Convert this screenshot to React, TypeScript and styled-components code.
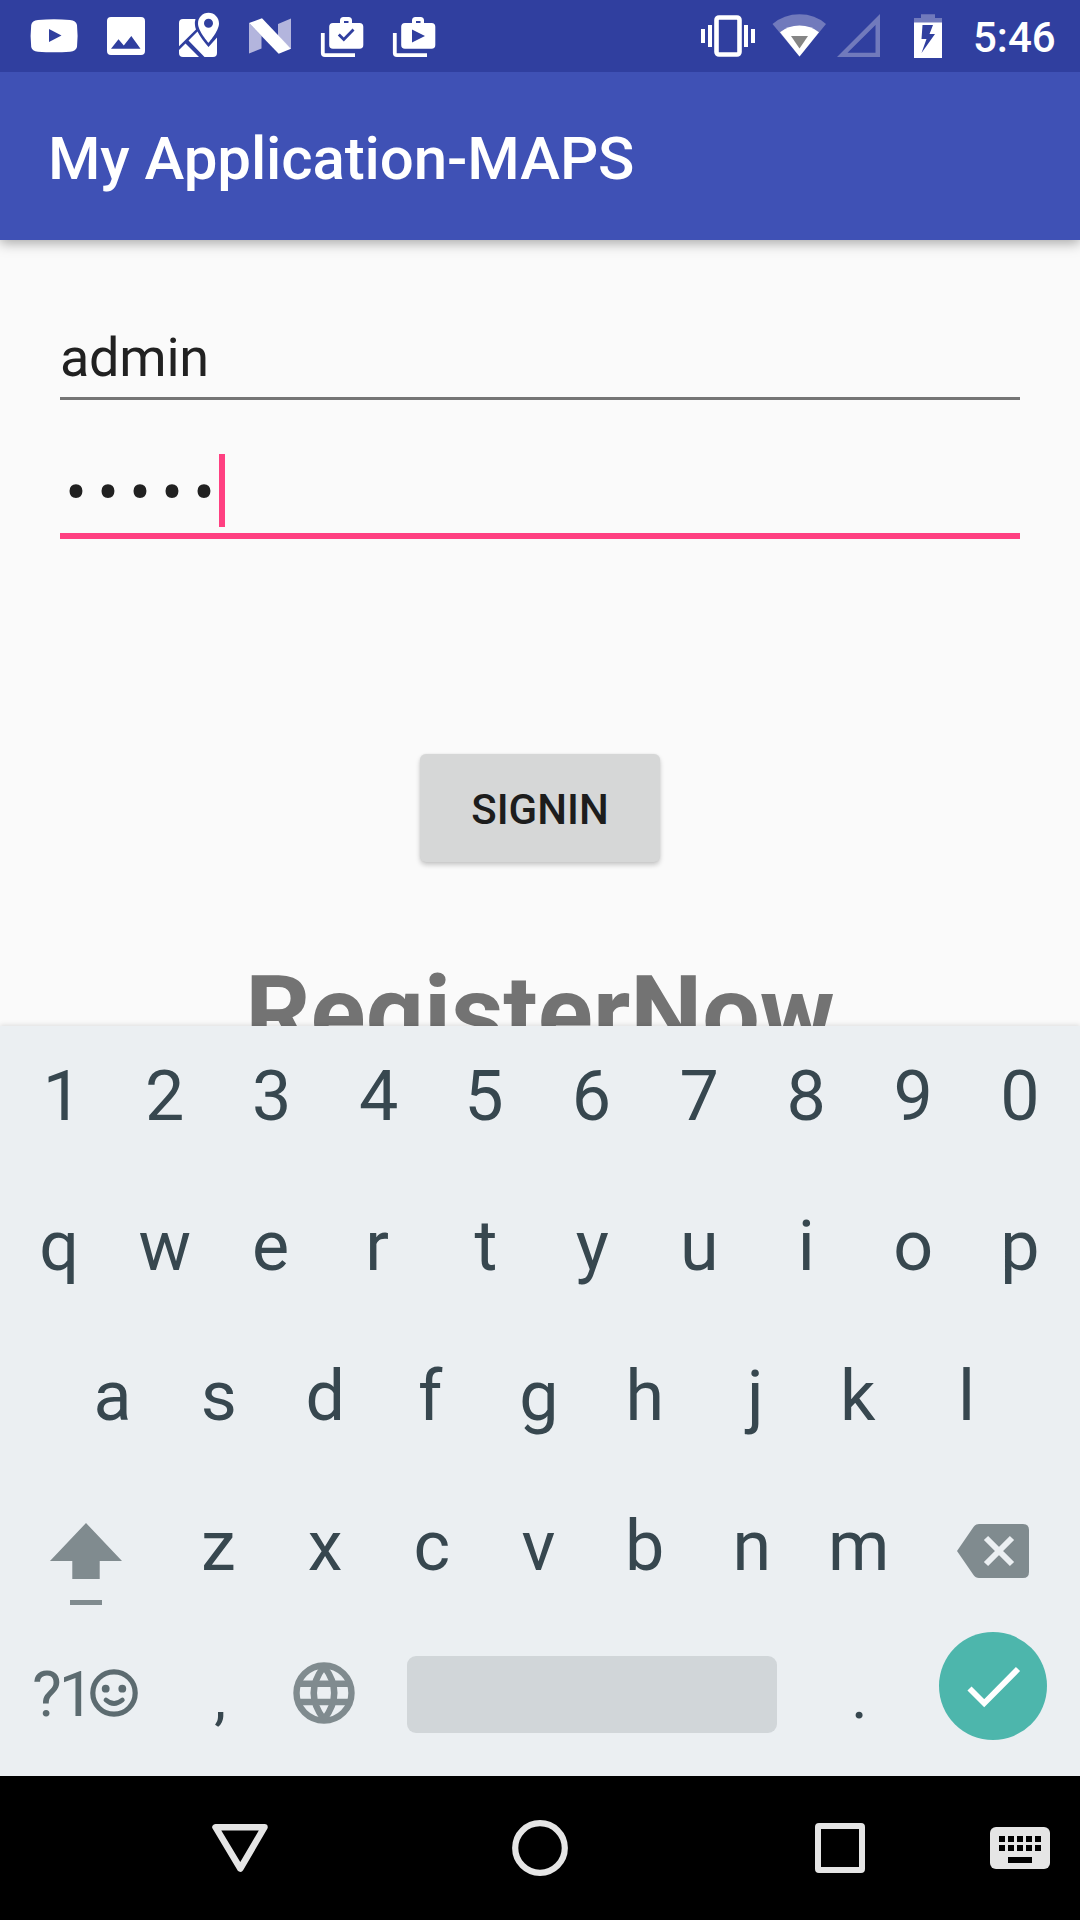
import React from "react";
import styled, { createGlobalStyle } from "styled-components";

const Global = createGlobalStyle`
  * { box-sizing: border-box; }
  body { margin: 0; }
`;

const Screen = styled.div`
  width: 1080px;
  height: 1920px;
  display: flex;
  flex-direction: column;
  overflow: hidden;
  background: #fafafa;
  font-family: Roboto, "Noto Sans", sans-serif;
`;

const StatusBar = styled.header`
  height: 72px;
  flex: none;
  display: flex;
  position: relative;
  z-index: 2;
  background: #303f9f;
  padding-left: 18px;
`;

const StatusGroup = styled.div`
  display: flex;
`;

const Icon = styled.svg`
  display: block;
  flex: none;
`;

const Spacer = styled.div`
  flex: 1;
`;

const Clock = styled.div`
  width: 107px;
  font-size: 42px;
  font-weight: 500;
  line-height: 69px;
  padding-top: 3px;
  color: #fff;
`;

const AppBar = styled.div`
  height: 168px;
  flex: none;
  position: relative;
  z-index: 1;
  background: #3f51b5;
  padding: 5px 48px 0;
  box-shadow: 0 3px 12px rgba(0, 0, 0, 0.34);
`;

const Title = styled.h1`
  margin: 0;
  color: #fff;
  font-size: 60px;
  font-weight: 500;
  line-height: 163px;
  letter-spacing: -0.1px;
  white-space: nowrap;
`;

const Main = styled.main`
  height: 786px;
  flex: none;
  overflow: hidden;
  display: flex;
  flex-direction: column;
  align-items: center;
  padding-top: 82px;
`;

const Field = styled.div<{ $active?: boolean }>`
  width: 960px;
  flex: none;
  height: ${(p) => (p.$active ? 91 : 78)}px;
  margin-top: ${(p) => (p.$active ? 48 : 0)}px;
  display: flex;
  align-items: flex-start;
  border-bottom: ${(p) => (p.$active ? "6px solid #ff4081" : "3px solid #757575")};
`;

const FieldText = styled.span`
  font-size: 54px;
  line-height: 71px;
  letter-spacing: -0.25px;
  color: #212121;
`;

const Dots = styled.span`
  width: 159px;
  padding: 10px 0 0 5.2px;
  font-size: 64px;
  line-height: 71px;
  letter-spacing: 10.4px;
  white-space: nowrap;
  color: #212121;
`;

const Caret = styled.span`
  width: 6px;
  height: 73px;
  margin-top: 6px;
  background: #ff4081;
`;

const SignIn = styled.button`
  flex: none;
  width: 240px;
  height: 108px;
  margin-top: 215px;
  border: 0;
  border-radius: 6px;
  padding: 3px 0 0;
  background: #d6d7d7;
  color: #1d1d1d;
  font: 500 42px/105px Roboto, sans-serif;
  box-shadow: 0 3px 5px rgba(0, 0, 0, 0.2), 0 0 2px rgba(0, 0, 0, 0.08);
`;

const Register = styled.div`
  flex: none;
  margin-top: 91px;
  font-size: 102px;
  font-weight: 700;
  line-height: 120px;
  color: #737373;
`;

const Keyboard = styled.section`
  height: 750px;
  flex: none;
  position: relative;
  background: #ebeff2;
  box-shadow: 0 -1px 5px rgba(0, 0, 0, 0.12);
`;

const KeyRow = styled.div<{ $left?: number; $right?: number }>`
  height: 150px;
  display: flex;
  padding-left: ${(p) => p.$left ?? 0}px;
  padding-right: ${(p) => p.$right ?? 0}px;
`;

const Key = styled.div<{ $size?: number; $top?: number; $nudge?: number }>`
  flex: 1 1 0;
  min-width: 0;
  text-align: center;
  font-size: ${(p) => p.$size ?? 70}px;
  line-height: 140px;
  height: 140px;
  margin-top: ${(p) => p.$top ?? 0}px;
  text-indent: ${(p) => (p.$nudge ?? 0) * 2}px;
  color: #37474f;
`;

const FixedKey = styled(Key)<{ $w: number }>`
  flex: 0 0 ${(p) => p.$w}px;
`;

const SymbolKey = styled.div`
  width: 166px;
  flex: none;
  display: flex;
  padding-left: 32px;
  color: #5c6b70;
`;

const SymbolText = styled.span`
  width: 56px;
  flex: none;
  font-size: 63px;
  line-height: 137px;
  letter-spacing: -3px;
  white-space: nowrap;
`;

const SpaceKey = styled.div`
  width: 370px;
  height: 77px;
  flex: none;
  margin-top: 30px;
  border-radius: 9px;
  background: #d1d6d9;
`;

const NavBar = styled.nav`
  height: 144px;
  flex: none;
  background: #000;
  display: flex;
  padding-left: 90px;
`;

const nudges: Record<string, number> = {
  "1": 4.5,
  "5": -1.5,
  "6": -1,
  q: 1.2,
  e: -1,
  r: -1.5,
  t: 0.5,
  a: 1,
  s: 0.5,
  f: -2,
  h: -1,
  j: 2.5,
  k: -2,
  b: -0.7,
};

const keys = (s: string) =>
  s.split("").map((c) => (
    <Key key={c} $nudge={nudges[c]}>
      {c}
    </Key>
  ));

function BagShape() {
  return (
    <>
      <path d="M322.800 33V53Q322.800 55.200 325 55.200H355" fill="none" stroke="#fff" strokeWidth="3.800" />
      <path fill="#fff" fillRule="evenodd" d="M333 23H340V20.500Q340 17 343.500 17H348.500Q352 17 352 20.500V23H359.500Q363.300 23 363.300 26.800V45Q363.300 48.800 359.500 48.800H333Q329.200 48.800 329.200 45V26.800Q329.200 23 333 23ZM344 21V23H348.500V21Z" />
    </>
  );
}

function NotificationIcons() {
  return (
    <StatusGroup>
      <Icon width="72" height="72" viewBox="18 0 72 72">
        <path fill="#fff" fillRule="evenodd" d="M38 20Q54 18.600 70 20Q76 20.500 77 25Q78.200 36 77 47Q76 51.200 70 51.700Q54 53 38 51.700Q32 51.200 31.200 47Q30 36 31.200 25Q32 20.500 38 20ZM49 29V42L61.500 35.500Z" />
      </Icon>
      <Icon width="72" height="72" viewBox="90 0 72 72">
        <path fill="#fff" fillRule="evenodd" d="M111 17H141Q145 17 145 21V51Q145 55 141 55H111Q107 55 107 51V21Q107 17 111 17ZM111 48.700H140.500L131.300 36L123.800 45.500L118.500 39.200Z" />
      </Icon>
      <Icon width="72" height="72" viewBox="162 0 72 72">
        <path fill="#fff" d="M183 19H195.500Q194 24 196 29.500L179 46.300V23Q179 19 183 19Z" />
        <path fill="#fff" d="M185.500 43.500L199 57H183Q179 57 179 53V50Z" />
        <path fill="#fff" d="M188.500 40.500L197.500 31.500Q201 38.500 208.500 47L217 37.500V53Q217 57 213 57H204.500Z" />
        <path fill="#fff" fillRule="evenodd" d="M208.500 12.700C202.500 12.700 198 17.500 198 23.500C198 31 208.500 42.800 208.500 42.800S219 31 219 23.500C219 17.500 214.500 12.700 208.500 12.700ZM208.500 18.700A4.500 4.500 0 1 1 208.500 27.700A4.500 4.500 0 1 1 208.500 18.700Z" />
      </Icon>
      <Icon width="72" height="72" viewBox="234 0 72 72">
        <path fill="#b3b5dd" d="M249 23L261.500 36V48.500L249 53.500ZM278 24L291 18.500V49L278 36Z" />
        <path fill="#fff" d="M249 23L262 18.200L291 48.700L278.700 53.700Z" />
      </Icon>
      <Icon width="72" height="72" viewBox="306 0 72 72">
        <BagShape />
        <path d="M338.800 34.500L343.800 39.500L353.500 29.500" fill="none" stroke="#303f9f" strokeWidth="2.800" />
      </Icon>
      <Icon width="72" height="72" viewBox="306 0 72 72">
        <BagShape />
        <path d="M340 29.500V42.500L353 36Z" fill="#303f9f" />
      </Icon>
    </StatusGroup>
  );
}

function SystemIcons() {
  return (
    <Icon width="288" height="72" viewBox="685 0 288 72">
      <rect x="716.500" y="17.500" width="23" height="37" rx="2.500" fill="none" stroke="#fff" strokeWidth="4.600" />
      <path fill="#fff" d="M708 25h4v22h-4zM701 29h4v14h-4zM744 25h4v22h-4zM751 29h4v14h-4z" />
      <path fill="#717abc" d="M772.500 24Q784 14.300 799.500 14.300T826 24L799.500 56.500Z" />
      <path fill="#fff" d="M780 32.300Q788 25.500 799.500 25.500T819 32.300L799.500 56.500Z" />
      <path fill="#858585" d="M791 36H808L799.500 48.500Z" />
      <path fill="#717abc" fillRule="evenodd" d="M880 14V57H837ZM875.500 25L847.500 52.700H875.500Z" />
      <path fill="#717abc" d="M921 14.300H935V18H942V23H914V18H921Z" />
      <path fill="#fff" fillRule="evenodd" d="M914 22.500H942V58H914ZM922.500 25L921.500 39H926.500L921.500 53L935 34H929.500L933 25Z" />
    </Icon>
  );
}

export default function App() {
  return (
    <>
      <Global />
      <Screen>
        <StatusBar>
          <NotificationIcons />
          <Spacer />
          <SystemIcons />
          <Clock>5:46</Clock>
        </StatusBar>
        <AppBar>
          <Title>My Application-MAPS</Title>
        </AppBar>
        <Main>
          <Field>
            <FieldText>admin</FieldText>
          </Field>
          <Field $active>
            <Dots>•••••</Dots>
            <Caret />
          </Field>
          <SignIn>SIGNIN</SignIn>
          <Register>RegisterNow</Register>
        </Main>
        <Keyboard>
          <KeyRow $left={4.4} $right={6.6}>{keys("1234567890")}</KeyRow>
          <KeyRow $left={4.4} $right={6.6}>{keys("qwertyuiop")}</KeyRow>
          <KeyRow $left={58} $right={60}>{keys("asdfghjkl")}</KeyRow>
          <KeyRow>
            <Icon width="165" height="150" viewBox="0 1476 165 150">
              <path fill="#808b8f" d="M86 1523L122 1561H99.700V1579H72.300V1561H50ZM70 1600H102V1605H70Z" />
            </Icon>
            {keys("zxcvbnm")}
            <Icon width="168" height="150" viewBox="912 1476 168 150">
              <path fill="#808b8f" d="M979 1524H1023Q1029 1524 1029 1530V1572Q1029 1578 1023 1578H979Q975.500 1578 973.500 1575L957 1551L973.500 1527Q975.500 1524 979 1524Z" />
              <path stroke="#ebeff2" strokeWidth="6" d="M986 1538L1012 1564M1012 1538L986 1564" />
            </Icon>
          </KeyRow>
          <KeyRow>
            <SymbolKey>
              <SymbolText>?1</SymbolText>
              <Icon width="52" height="150" viewBox="88 1626 52 150">
                <circle cx="114" cy="1693" r="21.200" fill="none" stroke="#5c6b70" strokeWidth="5.200" />
                <circle cx="105.700" cy="1688.700" r="3.900" fill="#5c6b70" />
                <circle cx="122.300" cy="1688.700" r="3.900" fill="#5c6b70" />
                <path d="M106 1700Q114 1707 122.300 1700" fill="none" stroke="#5c6b70" strokeWidth="4.800" strokeLinecap="round" />
              </Icon>
            </SymbolKey>
            <FixedKey $w={107} $size={60} $top={2} $nudge={0.6}>,</FixedKey>
            <Icon width="134" height="150" viewBox="273 1626 134 150">
              <g fill="none" stroke="#808b8f" strokeWidth="6.400" strokeLinejoin="round">
                <circle cx="324" cy="1693" r="27.500" />
                <path d="M297 1683.800H351M297 1702H351" />
                <path d="M324 1666.500Q303.500 1693 324 1719.500Q344.500 1693 324 1666.500Z" />
              </g>
            </Icon>
            <SpaceKey />
            <FixedKey $w={162} $size={62} $top={1} $nudge={1.5}>.</FixedKey>
            <Icon width="141" height="150" viewBox="939 1626 141 150">
              <circle cx="993" cy="1686" r="54" fill="#4db6ac" />
              <path d="M969.500 1688.500L984.200 1703.200L1018 1669" fill="none" stroke="#fff" strokeWidth="5.800" />
            </Icon>
          </KeyRow>
        </Keyboard>
        <NavBar>
          <Icon width="300" height="144" viewBox="90 1776 300 144">
            <path d="M215.500 1827.200H264.500L240.300 1868.500Z" fill="none" stroke="#e5e5e5" strokeWidth="6.500" strokeLinejoin="round" />
          </Icon>
          <Icon width="300" height="144" viewBox="390 1776 300 144">
            <circle cx="540" cy="1848" r="24.800" fill="none" stroke="#e5e5e5" strokeWidth="6.200" />
          </Icon>
          <Icon width="300" height="144" viewBox="690 1776 300 144">
            <path fill="#e5e5e5" fillRule="evenodd" d="M819 1823H861Q865 1823 865 1827V1869Q865 1873 861 1873H819Q815 1873 815 1869V1827Q815 1823 819 1823ZM821 1829V1867H859V1829Z" />
          </Icon>
          <Icon width="90" height="144" viewBox="990 1776 90 144">
            <rect x="990" y="1827" width="60" height="42" rx="6" fill="#e5e5e5" />
            {[0, 1, 2, 3, 4].map((i) => (
              <path key={i} fill="#000" d={`M${999 + i * 9} 1836h6v6h-6zM${999 + i * 9} 1845h6v6h-6z`} />
            ))}
            <rect x="1008" y="1857" width="24" height="6" fill="#000" />
          </Icon>
        </NavBar>
      </Screen>
    </>
  );
}
